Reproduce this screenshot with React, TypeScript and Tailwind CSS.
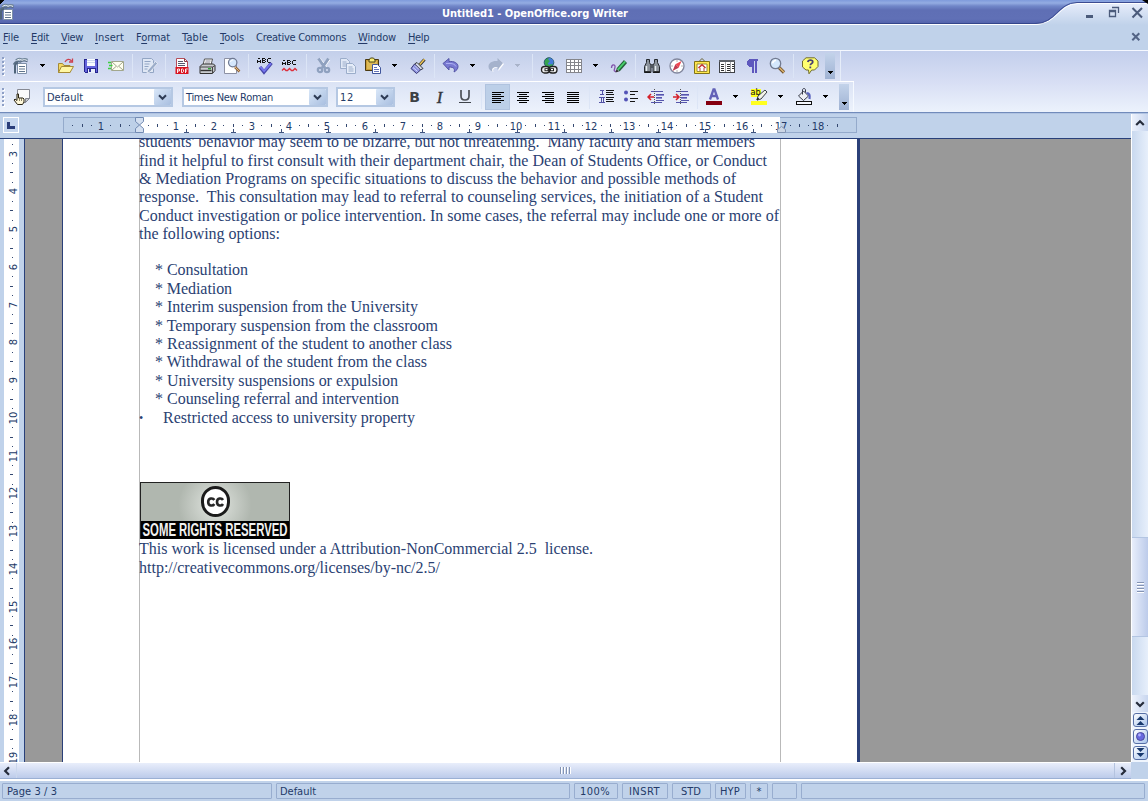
import { useLayoutEffect, useRef } from "react";
import type { ReactNode } from "react";

/* Text set to a fixed run width by spreading the difference over its letters. */
function Fit({ w, children, className = "" }: { w: number; children: ReactNode; className?: string }) {
  const ref = useRef<HTMLSpanElement>(null);
  useLayoutEffect(() => {
    const el = ref.current;
    if (!el) return;
    el.style.letterSpacing = "0px";
    const natural = el.getBoundingClientRect().width;
    const n = (el.textContent || "").length;
    if (n > 1) el.style.letterSpacing = `${(w - natural) / n}px`;
  }, [w]);
  return (
    <span ref={ref} className={`inline-block shrink-0 whitespace-pre ${className}`}>
      {children}
    </span>
  );
}

function Ico({ children, crisp = false }: { children: ReactNode; crisp?: boolean }) {
  return (
    <svg width="18" height="18" viewBox="0 0 18 18" fill="none" shapeRendering={crisp ? "crispEdges" : "auto"}>
      {children}
    </svg>
  );
}

function Tool({ children }: { children: ReactNode }) {
  return <div className="flex h-full w-[25px] shrink-0 items-center justify-center">{children}</div>;
}

function Caret({ dim = false }: { dim?: boolean }) {
  return (
    <div className="flex h-full w-5 shrink-0 items-center justify-center pr-[2px] pb-[2px]">
      <svg width="5" height="3" viewBox="0 0 5 3" shapeRendering="crispEdges">
        <path d="M0 0h5v1H4v1H3v1H2V2H1V1H0z" fill={dim ? "#a9b3c9" : "#000"} />
      </svg>
    </div>
  );
}

function Sep() {
  return (
    <div className="flex h-full w-2 shrink-0 items-center justify-center">
      <div className="h-6 w-px bg-[#dce5f6]" />
    </div>
  );
}

function Grip() {
  return (
    <div className="flex h-full w-[8px] shrink-0 items-center pl-[2px]">
      <svg width="3" height="19" viewBox="0 0 3 19" shapeRendering="crispEdges">
        {[0, 4, 8, 12, 16].map((y) => (
          <g key={y}>
            <rect x="1" y={y + 1} width="2" height="2" fill="#fff" />
            <rect x="0" y={y} width="2" height="2" fill="#8d9fc6" />
          </g>
        ))}
      </svg>
    </div>
  );
}

function EndCap() {
  return (
    <div className="flex w-[10px] shrink-0 items-end justify-center self-stretch bg-linear-to-b from-[#c3d3ea] to-[#9fb2d3] pb-[5px]">
      <svg width="5" height="3" viewBox="0 0 5 3" shapeRendering="crispEdges">
        <path d="M0 0h5v1H4v1H3v1H2V2H1V1H0z" fill="#000" />
      </svg>
    </div>
  );
}

function WriterDoc() {
  return (
    <Ico>
      <path d="M5.500 6.500h9v10h-9z" fill="#fff" stroke="#7d8fa8" />
      <path d="M7 9.500h6M7 12h6M7 14.500h6" stroke="#5f748c" />
      <path d="M3 16.500V9c0-2 1-3 3-3.500" stroke="#4f6479" strokeWidth="2" />
      <path d="M1.500 7.500C3 4.500 5.500 4 8.500 5c2-1.500 4.500-1.500 7-.5" stroke="#5b6f86" strokeWidth="1.500" />
      <path d="M4 3.500c2-2 4-2 6-.5 2-1.300 4-1 5.500 0" stroke="#708599" strokeWidth="2.400" />
      <path d="M4.500 3.500c2-1.500 4-1.500 5.500-.2 1.500-1 3.500-.8 5 .2" stroke="#eef4f8" strokeWidth="1" />
    </Ico>
  );
}

function Abc() {
  return (
    <g stroke="#111" strokeWidth="1" shapeRendering="crispEdges">
      <path d="M1.500 6V2.500M4.500 6V2.500M2 1.500h2M2 4.500h2M6.500 1v5M7 1.500h2M7 3.500h2M7 5.500h2M9.500 2v1M9.500 4v1M11.500 2v3M12 1.500h3M12 5.500h3" />
    </g>
  );
}

function Lines({ rows }: { rows: [number, number][] }) {
  return (
    <Ico crisp>
      {rows.map(([x, w], i) => (
        <rect key={i} x={x} y={4 + i * 2} width={w} height="1" fill="#000" />
      ))}
    </Ico>
  );
}

function StandardBar() {
  return (
    <div className="flex h-[30px] w-[841px] items-center border-r border-[#e6edf9] bg-linear-to-b from-[#c3cfea] to-[#d9e0f4]">
      <Grip />
      <Tool><WriterDoc /></Tool>
      <Caret />
      <Tool>
        <Ico>
          <path d="M1.500 15.500v-9h4l1.500 2h6v7z" fill="#f5d964" stroke="#a58a35" />
          <path d="M1.500 15.500l3-6h12l-3.500 6z" fill="#fff7a4" stroke="#a58a35" />
          <path d="M8 5c1.500-3 4.500-3.500 6.500-1M15.500 1.500V5H12" stroke="#cc3f4e" strokeWidth="1.300" />
        </Ico>
      </Tool>
      <Tool>
        <Ico crisp>
          <path d="M2 2h14v14H3l-1-1z" fill="#26268f" />
          <path d="M3 3h12v12H3z" fill="#6465dc" />
          <path d="M5 2h8v7H5z" fill="#f8fbff" />
          <path d="M5 3h8M5 5h8" stroke="#cdd9ee" />
          <path d="M5 11h9v5H5z" fill="#26268f" />
          <path d="M6 12h7v4H6z" fill="#e9eefa" />
          <path d="M7 12h2v3H7z" fill="#32329d" />
        </Ico>
      </Tool>
      <Tool>
        <Ico>
          <path d="M4.500 4.500h12v9h-12z" fill="#fffff0" stroke="#a2a78d" />
          <path d="M5 5l5.500 5L16 5M5 13l4-3.500M16 13l-4-3.500" stroke="#a2a78d" />
          <path d="M1 5.500h3M2 8.500h3.500M1 11.500h3" stroke="#3fce40" strokeWidth="1.500" />
        </Ico>
      </Tool>
      <Sep />
      <Tool>
        <Ico>
          <path d="M2.500 1.500h9l2 2v12h-11z" fill="#dfe7f5" stroke="#92a5c4" />
          <path d="M4.500 4.500h6M4.500 7h5M4.500 9.500h4M4.500 12h3" stroke="#92a5c4" />
          <path d="M7.500 13.500l8-9 2 2-7.500 8.500-3 1z" fill="#9cadca" stroke="#fff" strokeWidth=".6" />
        </Ico>
      </Tool>
      <Sep />
      <Tool>
        <Ico>
          <path d="M3.500 1.500h8l3 3v11h-11z" fill="#fff" stroke="#b54d59" />
          <path d="M11.500 1.500v3h3" stroke="#8c3d47" />
          <path d="M5 4.500h5M5 6.500h7M5 8.500h7" stroke="#57596d" />
          <path d="M2.500 10h13v7h-13z" fill="#d91420" />
          <path d="M4.500 16v-4h2v2h-2M8.500 12v3.500h1.200l.8-.8v-1.900l-.8-.8zM12.500 16v-4h2.200M12.500 14H14" stroke="#fff" strokeWidth=".9" />
        </Ico>
      </Tool>
      <Tool>
        <Ico>
          <path d="M5 8l1.500-6h8L13 8z" fill="#fff" stroke="#555" />
          <path d="M7.500 4h5M7 6h5" stroke="#889" />
          <path d="M2 9.500L4.500 7h11l1.500 1.500v5l-2.500 3H2z" fill="#c9ccd0" stroke="#333" />
          <path d="M2 10h12.500L17 8.500M14.500 10v6" stroke="#444" />
          <path d="M2.500 13.500h11" stroke="#333" strokeWidth="1.400" />
          <path d="M10 11.700h3" stroke="#29a32c" strokeWidth="1.300" />
        </Ico>
      </Tool>
      <Tool>
        <Ico>
          <path d="M1.500 1.500h9l3 3v12h-12z" fill="#fff" stroke="#8d91a4" />
          <path d="M12 10l4.500 4.500" stroke="#8f6742" strokeWidth="2.500" />
          <path d="M12 10l4.500 4.500" stroke="#e1b87d" strokeWidth="1" />
          <circle cx="9.700" cy="5.600" r="4.200" fill="#d5e7fc" stroke="#6e7892" strokeWidth="1.200" />
          <path d="M7.500 5C8 3.500 9 3 10.200 3" stroke="#fff" />
        </Ico>
      </Tool>
      <Sep />
      <Tool>
        <Ico>
          <Abc />
          <path d="M4 10l4 5 7.500-9" stroke="#4848aa" strokeWidth="3.400" />
          <path d="M4.300 9.800l3.800 4.400 6.800-7.800" stroke="#7676ef" strokeWidth="1.800" />
        </Ico>
      </Tool>
      <Tool>
        <Ico>
          <g transform="translate(0 2)"><Abc /></g>
          <path d="M1 13.500l2-2 2 2h1.500l2-2 2 2H12l2-2 2 2" stroke="#dd303c" strokeWidth="1.300" />
        </Ico>
      </Tool>
      <Sep />
      <Tool>
        <Ico>
          <path d="M5 2l7 9M15 2L8 11" stroke="#fff" strokeWidth="3.400" />
          <path d="M4.500 1.500l6.500 9.500M14.500 1.500L8 11" stroke="#8fa1bf" strokeWidth="3" />
          <circle cx="6" cy="13" r="2.200" stroke="#8fa1bf" strokeWidth="2.200" />
          <circle cx="13" cy="13" r="2.200" stroke="#8fa1bf" strokeWidth="2.200" />
        </Ico>
      </Tool>
      <Tool>
        <Ico>
          <path d="M1.500 1.500h6l3 3v7h-9z" fill="#e0e8f6" stroke="#9badca" />
          <path d="M3.500 5h4M3.500 7h4M3.500 9h4" stroke="#9badca" />
          <path d="M7.500 6.500h6l3 3v7h-9z" fill="#e6edf9" stroke="#9badca" />
          <path d="M9.500 10h4M9.500 12h5M9.500 14h5" stroke="#9badca" />
        </Ico>
      </Tool>
      <Tool>
        <Ico>
          <path d="M1.500 2.500h13v11h-13z" fill="#c79c38" stroke="#4b3a12" />
          <path d="M3 4h10v8H3z" fill="#ddba57" />
          <path d="M5 5v-2L6.500 1h3L11 3v2z" fill="#f8ed76" stroke="#4d4515" />
          <path d="M8.500 7.500h5l3 3v6h-8z" fill="#fff" stroke="#40569c" />
          <path d="M10 10.500h3M10 12.500h5M10 14.500h5" stroke="#6474b9" />
        </Ico>
      </Tool>
      <Caret />
      <Tool>
        <Ico>
          <path d="M10.500 8l5-5.500" stroke="#2b2b2b" strokeWidth="3" />
          <path d="M10.500 7.700l5-5.500" stroke="#f2c957" strokeWidth="1.500" />
          <path d="M8 5.500l6 6-2.500 1.500-6-6z" fill="#d5d9e2" stroke="#34383e" />
          <path d="M5.500 7l6 6-4 3.500L2 11.500z" fill="#8d93df" stroke="#383875" />
          <path d="M4 10.500l4.500 4M6 8.500l4 4" stroke="#d9dcff" />
        </Ico>
      </Tool>
      <Sep />
      <Tool>
        <Ico>
          <path d="M1 6.500L7 1.500v3c5-.5 9 1.500 9 5 0 2.500-1.500 4-4 5.500 1-2.500.5-5-5-5v3z" fill="#7879d2" stroke="#5354a6" />
          <path d="M4 6.500h4c3 0 5 1 6 3" stroke="#adb0f2" />
        </Ico>
      </Tool>
      <Caret />
      <Tool>
        <Ico>
          <path d="M17 7L11.500 2v3C6 4.500 2.500 7 2.500 10c0 2.500 1.500 4 4 5-1-2.500 0-4.500 5-4.500V14z" fill="#fff" />
          <path d="M16 6l-5.500-5v3C5 3.500 1.500 6 1.500 9.500c0 2.500 1.500 4 4 5-1-2.500 0-4.500 5-4.500v3z" fill="#a5b2cc" />
        </Ico>
      </Tool>
      <Caret dim />
      <Sep />
      <Tool>
        <Ico>
          <circle cx="9" cy="5.500" r="4.800" fill="#35a450" stroke="#285870" />
          <path d="M9 1c4.500 0 5.500 4 3.500 6.500-2-1-3 1-4 0-2-2 2-2 1-4-1.500 0-1.500-1.500-.5-2.500z" fill="#467bda" />
          <rect x="1.500" y="9.500" width="8" height="6.500" rx="3" fill="#eee" stroke="#222" strokeWidth="1.300" />
          <rect x="9" y="9.500" width="8" height="6.500" rx="3" fill="#eee" stroke="#222" strokeWidth="1.300" />
          <path d="M4.500 12.700h9.500" stroke="#222" strokeWidth="3" />
          <path d="M5.500 12.700h2M11 12.700h2" stroke="#fff" strokeWidth="1.200" />
        </Ico>
      </Tool>
      <Tool>
        <Ico crisp>
          <path d="M1 2h16v14H1z" fill="#fff" />
          <path d="M1.500 2.500h15v13h-15zM1 5.500h16M1 8.500h16M1 12.500h16M5.500 2v14M9.500 2v14M13.500 2v14" stroke="#84858b" />
        </Ico>
      </Tool>
      <Caret />
      <Tool>
        <Ico>
          <path d="M1.500 11c0-4 4-4 3.500-1s-2 4 1 4.500" stroke="#8154aa" strokeWidth="1.300" />
          <path d="M8 13l7.500-8.500" stroke="#25633a" strokeWidth="4.200" />
          <path d="M8 12.700L15.200 4.500" stroke="#49d36c" strokeWidth="1.800" />
          <path d="M5.500 15.500l1-3.500 2.500 2.500z" fill="#333" />
        </Ico>
      </Tool>
      <Sep />
      <Tool>
        <Ico>
          <path d="M3.500 2.500h3v3l1.500 3v7H1.500v-6l2-4zM11.500 2.500h3v3l2 4v6H10v-7l1.500-3z" fill="#8b929b" stroke="#24282e" />
          <path d="M7.500 7h3v4h-3z" fill="#50565f" />
          <path d="M3.500 9v5M12.500 9v5" stroke="#e7edf0" strokeWidth="1.400" />
          <path d="M1.500 15h6M10.500 15h6" stroke="#111" strokeWidth="1.500" />
        </Ico>
      </Tool>
      <Tool>
        <Ico>
          <circle cx="9" cy="9" r="7" fill="#fff" stroke="#81869d" strokeWidth="1.300" />
          <path d="M13.500 4l-2.800 6.800L7.400 7.300z" fill="#ef4650" />
          <path d="M4.500 14l2.900-6.700 3.300 3.500z" fill="#bf3d52" />
          <path d="M9 3.500v1M9 13.500v1M3.500 9h1M13.500 9h1" stroke="#666" />
        </Ico>
      </Tool>
      <Tool>
        <Ico>
          <path d="M6 4.500L9 1.500l3 3" stroke="#6a6131" />
          <path d="M1.500 4.500h15v12h-15z" fill="#ffe74e" stroke="#817317" />
          <path d="M4 7h10v7.500H4z" fill="#fff" stroke="#9b8c32" />
          <path d="M5.500 11L9 7.800l3.500 3.200" stroke="#c4302d" strokeWidth="1.500" />
          <path d="M7 11v3M11 11v3" stroke="#b24843" />
        </Ico>
      </Tool>
      <Tool>
        <Ico crisp>
          <path d="M1.500 3.500h15v12h-15z" fill="#fff" stroke="#3e4146" />
          <path d="M1 3h16v2H1z" fill="#5d6168" />
          <path d="M7.500 5v10M12.500 5v10" stroke="#a4a5a8" />
          <path d="M3 7.500h3M3 9.500h3M3 11.500h3M3 13.500h3M9 7.500h3M9 9.500h3M9 11.500h3M9 13.500h3M14 7.500h2M14 9.500h2M14 11.500h2" stroke="#333" />
        </Ico>
      </Tool>
      <Tool>
        <Ico crisp>
          <path d="M6 2h9v2h-1v12h-2V4h-1v12H9v-6H6V9H5V8H4V4h1V3h1z" fill="#5e58bd" />
        </Ico>
      </Tool>
      <Tool>
        <Ico>
          <path d="M11 10.500l5 5" stroke="#6f522f" strokeWidth="3.200" />
          <path d="M11 10.300l5 5" stroke="#dfb670" strokeWidth="1.500" />
          <circle cx="7.500" cy="6.500" r="5.200" fill="#d4e7fc" stroke="#727b92" strokeWidth="1.300" />
          <path d="M4.500 6.200C5 4.200 6 3.500 8 3.200" stroke="#fff" strokeWidth="1.600" />
        </Ico>
      </Tool>
      <Sep />
      <Tool>
        <Ico>
          <path d="M5 .8h8.500L17 4v5.500L13.500 13h-2.800L8 16.800 7.500 13H5L1.500 10V4z" fill="#ffff70" stroke="#716d2c" />
          <path d="M6.800 5c.4-2.500 5-2.500 5 0 0 1.500-2.500 1.500-2.500 3.200" stroke="#484071" strokeWidth="1.700" />
          <path d="M8.400 9.500h1.800v1.800H8.400z" fill="#484071" />
        </Ico>
      </Tool>
      <div className="flex h-[26px] pl-[3px]"><EndCap /></div>
    </div>
  );
}

function Combo({ children, className }: { children: ReactNode; className: string }) {
  return (
    <div className={`flex h-5 shrink-0 items-center border-2 border-[#b5c8e3] bg-white pl-[2px] ${className}`}>
      <div className="flex grow items-center pt-px">{children}</div>
      <div className="flex h-4 w-[17px] items-center justify-center rounded-[1px] bg-linear-to-br from-[#d9e7f8] to-[#a9bfe0]">
        <svg width="9" height="7" viewBox="0 0 9 7" fill="none">
          <path d="M1 1.300l3.500 3.500L8 1.300" stroke="#2e3c55" strokeWidth="2" />
        </svg>
      </div>
    </div>
  );
}

function FormatBar() {
  return (
    <div className="flex h-[30px] w-[854px] items-center border-r border-[#f5f9ff] bg-linear-to-b from-[#dbe3f5] to-[#edf2fc]">
      <Grip />
      <Tool>
        <Ico>
          <path d="M5.500 1.500h12v9l-4 4h-8z" fill="#fafafa" stroke="#868993" />
          <path d="M13.500 14.500v-4h4z" fill="#c7c8cb" stroke="#82858e" />
          <path d="M5.500 16.500L2 12l1-1 2 1.500V6h1.500v4h4.500l1 1v3l-1.500 2.500z" fill="#fff8da" stroke="#272211" />
          <path d="M7.500 10v3M9.500 10v3" stroke="#58523a" strokeWidth=".7" />
        </Ico>
      </Tool>
      <Combo className="ml-[10px] w-[130px]"><Fit w={36}>Default</Fit></Combo>
      <Combo className="ml-[9px] w-[146px]"><Fit w={87}>Times New Roman</Fit></Combo>
      <Combo className="ml-[8px] mr-[7px] w-[59px]"><Fit w={14}>12</Fit></Combo>
      <Tool><span className="font-['DejaVu_Sans',sans-serif] text-[14px] font-bold text-[#3c4045]">B</span></Tool>
      <Tool><span className="font-['Liberation_Serif',serif] text-[17px] italic leading-none text-[#33373d] [-webkit-text-stroke:0.4px_#33373d]">I</span></Tool>
      <Tool>
        <Ico>
          <path d="M5 2v6c0 2.500 1.500 4 4 4s4-1.500 4-4V2" stroke="#4c5158" strokeWidth="1.700" />
          <path d="M3 14.500h12" stroke="#3f444b" />
        </Ico>
      </Tool>
      <Sep />
      <div className="flex h-[26px] w-[25px] shrink-0 items-center justify-center border border-[#b0c3df] bg-[#bccfe8]">
        <Lines rows={[[3, 12], [3, 9], [3, 12], [3, 9], [3, 12], [3, 9]]} />
      </div>
      <Tool><Lines rows={[[3, 12], [5, 8], [3, 12], [5, 8], [3, 12], [5, 8]]} /></Tool>
      <Tool><Lines rows={[[3, 12], [6, 9], [3, 12], [6, 9], [3, 12], [6, 9]]} /></Tool>
      <Tool><Lines rows={[[3, 12], [3, 12], [3, 12], [3, 12], [3, 12], [3, 12]]} /></Tool>
      <Sep />
      <Tool>
        <Ico crisp>
          <path d="M3 2.500h4M5 2v5M3 6.500h4M2 9.500h6M4.500 9v5M6.500 9v5M2 14.500h6" stroke="#5353a5" />
          <path d="M9 2.500h8M9 4.500h7M9 6.500h8M9 9.500h8M9 11.500h7M9 13.500h8" stroke="#151515" />
        </Ico>
      </Tool>
      <Tool>
        <Ico>
          <circle cx="4" cy="4.500" r="2" fill="#5353b7" />
          <circle cx="4" cy="11.500" r="2" fill="#5353b7" />
          <path d="M8 3.500h8M8 6.500h5M8 10.500h8M8 13.500h5" stroke="#151515" shapeRendering="crispEdges" />
        </Ico>
      </Tool>
      <Tool>
        <Ico crisp>
          <path d="M4 3.500h12M9 6h8M9 9h6M9 12h8M4 14.500h11" stroke="#5656ab" />
          <path d="M9 7h8M9 10h6" stroke="#8c8cd2" />
          <path d="M7.500 1v16" stroke="#555" strokeDasharray="1 1" />
          <path d="M1 9h6M4 6L1 9l3 3" stroke="#d4202b" strokeWidth="1.500" shapeRendering="auto" />
        </Ico>
      </Tool>
      <Tool>
        <Ico crisp>
          <path d="M4 3.500h12M9 6h8M9 9h6M9 12h8M4 14.500h11" stroke="#5656ab" />
          <path d="M9 7h8M9 10h6" stroke="#8c8cd2" />
          <path d="M8.500 1v16" stroke="#555" strokeDasharray="1 1" />
          <path d="M1 9h6M4 6l3 3-3 3" stroke="#d4202b" strokeWidth="1.500" shapeRendering="auto" />
        </Ico>
      </Tool>
      <Sep />
      <Tool>
        <Ico>
          <path d="M5 11.500L8.500 1.500h1L13 11.500M6.200 8h5.600" stroke="#6261b7" strokeWidth="2.300" />
          <path d="M1 13h16v4H1z" fill="#850010" />
        </Ico>
      </Tool>
      <Caret />
      <Tool>
        <div className="relative flex h-[18px] w-[18px]">
          <svg width="18" height="18" viewBox="0 0 18 18" fill="none">
            <path d="M1 1h10v8H1zM1 13h16v4H1z" fill="#ffff20" />
            <path d="M7 12l1-4 7-6 2 2-6 7z" fill="#f3f4e8" stroke="#3b4148" />
            <path d="M7 12l1.500-2" stroke="#222" strokeWidth="1.500" />
          </svg>
          <span className="absolute -top-px left-[1px] text-[9px] leading-[10px] text-[#111]">ab</span>
        </div>
      </Tool>
      <Caret />
      <Tool>
        <Ico>
          <path d="M8.500 3l5 5-5 4.500-5-4.500z" fill="#eef0f5" stroke="#363a49" />
          <path d="M7.500 6.500V2c0-2 3-2 3 0v2.500" stroke="#363a49" />
          <path d="M11.500 5c3 0 3.500 2 3 6" stroke="#5963bd" strokeWidth="2.200" />
          <path d="M1.500 13.500h15v3h-15z" fill="#f5f8ff" stroke="#111" shapeRendering="crispEdges" />
        </Ico>
      </Tool>
      <Caret />
      <div className="flex h-[26px] pl-[3px]"><EndCap /></div>
    </div>
  );
}

const menu: [string, string, string, number][] = [
  ["", "F", "ile", 16],
  ["", "E", "dit", 18],
  ["", "V", "iew", 22],
  ["", "I", "nsert", 29],
  ["F", "o", "rmat", 34],
  ["T", "a", "ble", 26],
  ["", "T", "ools", 24],
  ["Creative Commons", "", "", 90],
  ["", "W", "indow", 38],
  ["", "H", "elp", 21],
];

const CM = 37.75;
const steps = (from: number, to: number) => Array.from({ length: to - from + 1 }, (_, i) => from + i);

function HRuler() {
  const x0 = 76;
  return (
    <svg width="795" height="17" viewBox="0 0 795 17" className="shrink-0">
      <rect x=".5" y=".5" width="793" height="15" fill="#bdd0e8" stroke="#94aacb" />
      <rect x={x0} y="0" width="641" height="16" fill="#fff" />
      {steps(-7, 74).map((q) => {
        const x = Math.round(x0 + (q * CM) / 4 - 0.6);
        if (q === 0 || q === 68) return null;
        if (q % 4 === 0)
          return (
            <text key={q} x={x} y="13" textAnchor="middle" fontSize="11" fill="#233a68">
              {Math.abs(q / 4)}
            </text>
          );
        const half = q % 2 === 0;
        return <rect key={q} x={x} y={half ? 7 : 8} width="1" height={half ? 3 : 1} fill="#33476f" />;
      })}
      <text x="718" y="13" textAnchor="middle" fontSize="11" fill="#233a68">17</text>
      {steps(1, 13).map((t) => {
        const x = Math.round(x0 + t * 47.2);
        return <path key={t} d={`M${x + 0.5} 12v4M${x - 2} 15.500h5`} stroke="#40547e" />;
      })}
      <path d="M72.500.5h8v4l-4 3.500-4-3.500zM72.500 15.500v-4l4-3.500 4 3.500v4z" fill="#d4e0f1" stroke="#728bb3" />
      <path d="M714.500 15.500v-3l4-3 4 3v3z" fill="#ccd6e5" stroke="#8395b3" />
    </svg>
  );
}

function VRuler() {
  return (
    <svg width="15" height="623" viewBox="0 0 15 623" className="ml-1 bg-white">
      {steps(11, 77).map((q) => {
        const y = Math.round(14.5 + ((q - 12) * 37.75) / 4);
        if (q % 4 === 0)
          return (
            <text key={q} x="13" y={y} transform={`rotate(-90 13 ${y})`} textAnchor="middle" fontSize="11" fill="#233a68">
              {q / 4}
            </text>
          );
        const half = q % 2 === 0;
        return <rect key={q} x={half ? 6 : 8} y={y} width={half ? 3 : 1} height="1" fill="#33476f" />;
      })}
    </svg>
  );
}

function Line({ w, children, className = "" }: { w: number; children: string; className?: string }) {
  return (
    <div className={`flex h-[18.4px] items-center ${className}`}>
      <Fit w={w}>{children}</Fit>
    </div>
  );
}

const options: [string, number][] = [
  ["* Consultation", 92],
  ["* Mediation", 76],
  ["* Interim suspension from the University", 262],
  ["* Temporary suspension from the classroom", 282],
  ["* Reassignment of the student to another class", 296],
  ["* Withdrawal of the student from the class", 271],
  ["* University suspensions or expulsion", 242],
  ["* Counseling referral and intervention", 243],
];

function Badge() {
  return (
    <div className="ml-px mt-[55px] mb-[0.800px] flex h-[57.500px] w-[150px] flex-col border border-[#222] bg-[radial-gradient(circle_at_50%_40%,#e2e6e1_0,#b0b7af_45%)]">
      <div className="flex h-[38px] shrink-0 items-center justify-center">
        <div className="flex h-[31px] w-[29px] items-center justify-center rounded-full border-[3px] border-[#1b1b1b] bg-white">
          <svg width="19" height="12" viewBox="0 0 19 12" fill="none" stroke="#262626" strokeWidth="2.600">
            <path d="M8.300 4C7 1.700 2.200 1.800 2.200 6s4.800 4.300 6.100 2M17 4c-1.300-2.300-6-2.200-6 2s4.700 4.300 6 2" />
          </svg>
        </div>
      </div>
      <svg width="148" height="18" viewBox="0 0 148 18" className="shrink-0 bg-black">
        <text
          x="1.5"
          y="15"
          fontFamily="Liberation Sans, sans-serif"
          fontSize="18"
          fontWeight="bold"
          fill="#f1f1f1"
          textLength="145"
          lengthAdjust="spacingAndGlyphs"
        >
          SOME RIGHTS RESERVED
        </text>
      </svg>
    </div>
  );
}

function Page() {
  return (
    <div className="flex h-full w-[798px] border-l border-r-[3px] border-[#2b4079] bg-white pl-[76px]">
      <div className="h-full w-[642px] border-x border-[#b9b9b9]">
        <div className="-ml-px -mt-[5.900px] font-['Liberation_Serif',serif] text-[16px] leading-[18.400px] text-[#2a4172]">
          <Line w={616}>{"students' behavior may seem to be bizarre, but not threatening.  Many faculty and staff members"}</Line>
          <Line w={628}>find it helpful to first consult with their department chair, the Dean of Students Office, or Conduct</Line>
          <Line w={597}>{"& Mediation Programs on specific situations to discuss the behavior and possible methods of"}</Line>
          <Line w={624}>{"response.  This consultation may lead to referral to counseling services, the initiation of a Student"}</Line>
          <Line w={640}>Conduct investigation or police intervention. In some cases, the referral may include one or more of</Line>
          <Line w={141} className="mb-[18px]">the following options:</Line>
          {options.map(([t, w]) => (
            <Line key={t} w={w + 1} className="pl-[16px]">{t}</Line>
          ))}
          <div className="flex h-[18.400px] items-center">
            <span className="w-6 text-[12px]">•</span>
            <Fit w={252}>Restricted access to university property</Fit>
          </div>
          <Badge />
          <Line w={454}>{"This work is licensed under a Attribution-NonCommercial 2.5  license."}</Line>
          <Line w={301}>http://creativecommons.org/licenses/by-nc/2.5/</Line>
        </div>
      </div>
    </div>
  );
}

function Chevron({ d }: { d: string }) {
  return (
    <svg width="10" height="10" viewBox="0 0 10 10" fill="none">
      <path d={d} stroke="#252c3b" strokeWidth="2.200" />
    </svg>
  );
}

function NavButton({ children }: { children: ReactNode }) {
  return (
    <div className="mb-[2px] flex h-[15px] w-[15px] items-center justify-center rounded-[3px] border border-[#576fa6] bg-linear-to-br from-white to-[#a9c4ec]">
      <svg width="11" height="11" viewBox="0 0 11 11">{children}</svg>
    </div>
  );
}

function VScroll() {
  return (
    <div className="flex w-[17px] shrink-0 flex-col border-l border-white bg-linear-to-r from-[#c9d9ef] to-[#e7effb]">
      <div className="flex h-[17px] items-center justify-center bg-linear-to-r from-[#edf2fc] to-[#c8d6ef]">
        <Chevron d="M1.200 7L5 3.200 8.800 7" />
      </div>
      <div className="h-[406px]" />
      <div className="flex h-[100px] flex-col items-center justify-center gap-px border-y border-[#b3c5e2] bg-linear-to-r from-[#e8eefb] to-[#bccbea]">
        {steps(0, 3).map((i) => (
          <div key={i} className="h-[2px] w-[7px] border-t border-[#8494b4] bg-white" />
        ))}
      </div>
      <div className="h-[58px]" />
      <div className="flex h-[17px] items-center justify-center bg-linear-to-r from-[#edf2fc] to-[#c8d6ef]">
        <Chevron d="M1.200 3.200L5 7l3.800-3.800" />
      </div>
      <div className="flex h-[50px] flex-col items-center bg-[#eff5fd] pt-px">
        <NavButton><path d="M1.500 5l4-4 4 4zM1.500 10l4-4 4 4z" fill="#18386d" /></NavButton>
        <NavButton><circle cx="5.500" cy="5.500" r="4" fill="#6868df" stroke="#4a4a9d" /><circle cx="4.500" cy="4" r="1.400" fill="#b1b1ff" /></NavButton>
        <NavButton><path d="M1.500 1l4 4 4-4zM1.500 6l4 4 4-4z" fill="#18386d" /></NavButton>
      </div>
    </div>
  );
}

function Status({ children, className }: { children?: ReactNode; className: string }) {
  return (
    <div className={`flex h-4 shrink-0 items-center rounded-[1px] border border-[#98adcf] pt-[2px] ${className}`}>{children}</div>
  );
}

export default function App() {
  return (
    <div className="flex h-[801px] w-[1148px] flex-col overflow-hidden bg-[#c0d2ea] font-['DejaVu_Sans_Condensed','DejaVu_Sans',sans-serif] text-[11px] leading-[14px] text-[#233a68]">
      <header className="flex h-[25px] shrink-0 bg-[linear-gradient(#7f9bdc_0px,#94ace2_3px,#7187c9_6px,#5f6fb5_10px,#6070b6_19px,#5464ad_23px,#33458b_23px,#33458b_24px,#fff_24px)]">
        <div className="w-[442px] shrink-0 bg-[linear-gradient(135deg,#000_3px,transparent_3px)] pt-[3px]"><div className="-ml-[2px]"><WriterDoc /></div></div>
        <Fit w={185} className="mt-[7px] font-bold text-white">Untitled1 - OpenOffice.org Writer</Fit>
        <svg width="118" height="25" viewBox="0 0 118 25" className="ml-auto">
          <defs>
            <linearGradient id="tab" x1="0" y1="0" x2="0" y2="1">
              <stop offset="0" stopColor="#e7edfb" />
              <stop offset="1" stopColor="#c0d2ea" />
            </linearGradient>
          </defs>
          <path d="M0 25h4c22 0 24-22 44-22h70v22z" fill="url(#tab)" />
          <path d="M0 24.500h5c22 0 24-21 43-21h70" fill="none" stroke="#fff" />
          <path d="M0 23.500h5c21 0 23-21 42-21h71" fill="none" stroke="#3b4b91" />
          <path d="M118 0h-6l6 4z" fill="#000" />
          <rect x="56" y="15" width="7" height="3" fill="#4b5b7b" />
          <path d="M79.500 10.500h6v6h-6zM79 11.500h7M82 7.500h6.500V13" fill="none" stroke="#4b5b7b" strokeWidth="1.300" />
          <path d="M102.500 8l9.500 9.500M112 8l-9.500 9.500" stroke="#4b5b7b" strokeWidth="2.100" />
        </svg>
      </header>
      <nav className="flex h-[25px] shrink-0 items-center gap-3 pt-px pl-[3px]">
        {menu.map(([a, u, b, w], i) => (
          <Fit key={i} w={w}>{a}<span className="underline underline-offset-2">{u}</span>{b}</Fit>
        ))}
        <svg width="10" height="10" viewBox="0 0 10 10" className="mr-[7px] mb-[2px] ml-auto">
          <path d="M1.300 1.300l7 7M8.300 1.300l-7 7" stroke="#526385" strokeWidth="2" />
        </svg>
      </nav>
      <section className="flex h-[62px] shrink-0 flex-col border-t border-[#f5f8ff] bg-linear-to-b from-[#c3cfec] via-[#d7def4] to-[#ecf2fc]">
        <StandardBar />
        <div className="h-px w-[854px] bg-white" />
        <FormatBar />
      </section>
      <div className="h-[2px] shrink-0 border-t border-[#718bbb] bg-[#b0c3e1]" />
      <main className="flex h-[648px] shrink-0">
        <div className="flex w-[1131px] flex-col">
          <div className="flex h-[25px] border-b border-[#28407a] pt-[3px]">
            <div className="mr-11 ml-[3px] flex h-4 w-4 items-center justify-center border border-white bg-[#c8d8ef]">
              <div className="h-[7px] w-2 border-b-[3px] border-l-[3px] border-[#2b3e7a]" />
            </div>
            <HRuler />
          </div>
          <div className="flex h-[623px]">
            <VRuler />
            <div className="ml-[5px] flex grow overflow-hidden border-l border-[#28407a] bg-[#999]">
              <div className="w-[37px] shrink-0" />
              <Page />
            </div>
          </div>
        </div>
        <VScroll />
      </main>
      <div className="flex h-[19px] shrink-0 items-start border-b-2 border-white">
        <div className="flex h-[17px] w-[1131px] items-center justify-between border-t border-b border-t-white border-b-[#9bb0d4] bg-linear-to-b from-[#e9eefb] to-[#bccbea]">
          <div className="flex h-full w-[17px] items-center justify-center border-r border-[#cad7ed] pr-[3px]"><Chevron d="M7 1.200L3.200 5 7 8.800" /></div>
          <div className="flex gap-px">
            {steps(0, 3).map((i) => (
              <div key={i} className="h-[7px] w-[2px] border-l border-[#8494b4] bg-white" />
            ))}
          </div>
          <div className="flex h-full w-[17px] items-center justify-center border-l border-[#b4c3df]"><Chevron d="M3.200 1.200L7 5 3.200 8.800" /></div>
        </div>
      </div>
      <footer className="flex h-[19px] shrink-0 pt-[2px] pl-[2px]">
        <Status className="mr-1 w-[270px] pl-1"><Fit w={50}>Page 3 / 3</Fit></Status>
        <Status className="mr-1 w-[294px] pl-[3px]"><Fit w={36}>Default</Fit></Status>
        <Status className="mr-1 w-11 pl-[5px]"><Fit w={30}>100%</Fit></Status>
        <Status className="mr-1 w-[46px] pl-[6px]"><Fit w={31}>INSRT</Fit></Status>
        <Status className="mr-1 w-[39px] pl-2"><Fit w={20}>STD</Fit></Status>
        <Status className="mr-1 w-[31px] pl-1"><Fit w={20}>HYP</Fit></Status>
        <Status className="mr-1 w-[18px] justify-center">*</Status>
        <Status className="mr-1 w-[25px]" />
        <Status className="w-[344px]" />
      </footer>
    </div>
  );
}
